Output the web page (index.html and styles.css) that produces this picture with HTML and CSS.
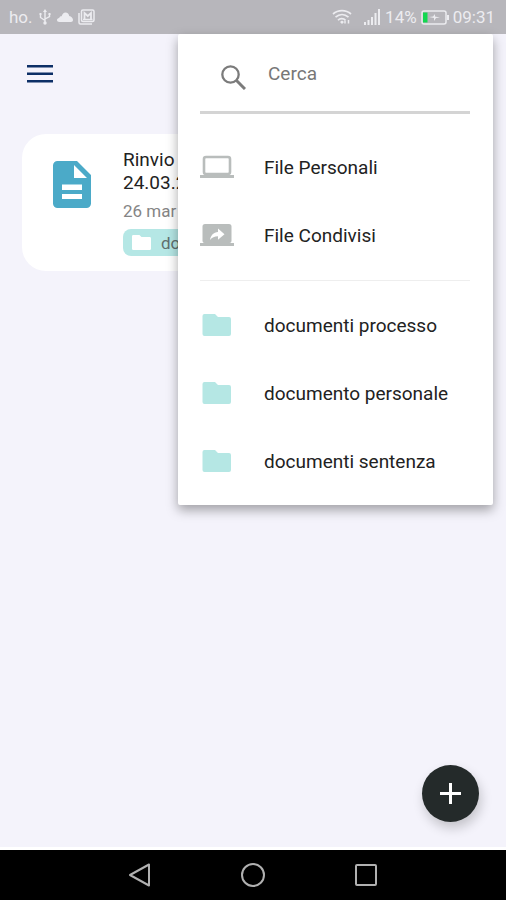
FILE: index.html
```html
<!DOCTYPE html>
<html lang="it">
<head>
<meta charset="utf-8">
<meta name="viewport" content="width=device-width, initial-scale=1">
<title>File</title>
<link rel="stylesheet" href="styles.css">
</head>
<body>
<div class="app">
  <header class="status">
    <div class="status-group">
      <span>ho.</span>
      <svg width="14" height="18" viewBox="0 0 14 18" fill="none" stroke="currentColor" stroke-width="1.4"><path d="M7 3v12M2.500 6.500v3L7 12.500M11.500 6v2.500L7 11"/><path d="M7 1l2 3H5zM1.500 5h2v2h-2zM10.500 5h2v2h-2z" fill="currentColor" stroke="none"/><circle cx="7" cy="15" r="1.700" fill="currentColor" stroke="none"/></svg>
      <svg width="16" height="10" viewBox="0 0 16 10" fill="currentColor"><path d="M2.500 10C.8 10 0 9 0 8s.9-2 2.200-2.100C2.800 4.600 3.800 4.200 4.600 4.300 5.300 1.900 6.700.5 8.600.5c2 0 3.300 1.500 3.600 3.400C14.500 4.200 16 6 16 8c0 1.300-.9 2-2 2z"/></svg>
      <svg width="17" height="16" viewBox="0 0 17 16" fill="none" stroke="currentColor" stroke-width="1.500"><path d="M1 4v9.500c0 1 .5 1.500 1.500 1.500H14"/><rect x="3.500" y="1" width="12.500" height="11.500" rx="1.500"/><path d="M6.500 10V4l3.300 3L13 4v6" stroke-width="1.800"/><path d="M5 10.500h9.500"/></svg>
    </div>
    <div class="status-group">
      <svg class="wifi" width="20" height="16" viewBox="0 0 20 16" fill="none" stroke="currentColor" stroke-width="1.700"><path d="M1 5c5-4.500 13-4.500 18 0M3.500 8.200c4-3.500 9-3.500 13 0M6 11.200c2-2.200 5.500-2.200 7.500 0"/><path d="M8 13l2-1.500 2 1.500-2 2z" fill="currentColor" stroke="none"/><path d="M13 14.500v-3M16.500 11v3.500" stroke-width="1.500"/></svg>
      <svg width="17" height="16" viewBox="0 0 17 16" fill="currentColor"><path d="M0 13h2v3H0zM3.500 11h2v5h-2zM7 8h2v8H7zM10.500 4h2v12h-2zM14 0h2v16h-2z"/></svg>
      <span>14%</span>
      <svg width="28" height="15" viewBox="0 0 28 15"><rect x="1" y="1" width="24" height="13" rx="2" fill="none" stroke="currentColor" stroke-width="1.500"/><path d="M26 5h2v5h-2z" fill="currentColor"/><path d="M2 2.500h4.500v10H2z" fill="#12d850"/><path d="M8 7l4-.5 2-2.500v2.500l5 1-4 .5-2 3V8z" fill="currentColor"/></svg>
      <span>09:31</span>
    </div>
  </header>

  <main class="screen">
    <button class="icon-button" type="button" aria-label="Menu">
      <svg width="26" height="18" viewBox="0 0 26 18" fill="#0c2f66"><path d="M0 0h26v2.500H0zM0 7.500h26V10H0zM0 15h26v2.500H0z"/></svg>
    </button>

    <article class="card">
      <svg class="card-icon" width="38" height="47" viewBox="0 0 38 47"><path fill="#4baac8" d="M4.500 0H24l14 14v28.500a4.500 4.500 0 0 1-4.500 4.500h-29A4.500 4.500 0 0 1 0 42.500v-38A4.500 4.500 0 0 1 4.500 0z"/><path fill="#fff" d="M21 4v13h13zM9 23.500h20V29H9zM9 33h20v5H9z"/></svg>
      <div class="card-body">
        <h2 class="card-title">Rinvio<br>24.03.2</h2>
        <p class="card-date">26 mar</p>
        <span class="tag">
          <svg width="19" height="15" viewBox="0 0 28 22" fill="#fff" preserveAspectRatio="none"><path d="M2 0h9l3 3h12a2 2 0 0 1 2 2v15a2 2 0 0 1-2 2H2a2 2 0 0 1-2-2V2a2 2 0 0 1 2-2z"/></svg>
          <span>do</span>
        </span>
      </div>
    </article>

    <button class="fab" type="button" aria-label="Aggiungi">
      <svg width="21" height="21" viewBox="0 0 21 21" fill="#fff"><path d="M9 0h3v9h9v3h-9v9H9v-9H0V9h9z"/></svg>
    </button>
  </main>

  <aside class="menu">
    <label class="search">
      <svg width="25" height="25" viewBox="0 0 25 25" fill="none" stroke="#7b7b7b" stroke-width="2.300"><circle cx="9.500" cy="9.500" r="8.200"/><path d="M15.500 15.500l8.500 8.500" stroke-width="3"/></svg>
      <input type="search" placeholder="Cerca" aria-label="Cerca">
    </label>
    <nav>
      <div class="group">
        <a class="item" href="#personali">
          <svg width="34" height="24" viewBox="0 0 34 24"><rect x="4" y="2" width="26" height="17" rx="2" fill="none" stroke="#b9bdbc" stroke-width="2.600"/><path d="M0 20h34v3H0z" fill="#b9bdbc"/></svg>
          <span>File Personali</span></a>
        <a class="item" href="#condivisi">
          <svg width="34" height="24" viewBox="0 0 34 24"><path d="M5 1h24a2.500 2.500 0 0 1 2.500 2.500V18a2 2 0 0 1-2 2H34v3H0v-3h4.500a2 2 0 0 1-2-2V3.500A2.500 2.500 0 0 1 5 1z" fill="#b9bdbc"/><path d="M10 17c.8-5 3.500-7.500 8-8V5.500l6.500 5.700-6.500 5.600v-3.500c-3.500 0-6 1.200-8 3.700z" fill="#fff"/></svg>
          <span>File Condivisi</span></a>
      </div>
      <div class="group">
        <a class="item" href="#processo">
          <svg class="folder" width="34" height="24" viewBox="0 0 34 24"><path d="M4.500 1H15l3 3h11a2 2 0 0 1 2 2v15a2 2 0 0 1-2 2H4.500a2 2 0 0 1-2-2V3a2 2 0 0 1 2-2z"/></svg>
          <span>documenti processo</span></a>
        <a class="item" href="#personale">
          <svg class="folder" width="34" height="24" viewBox="0 0 34 24"><path d="M4.500 1H15l3 3h11a2 2 0 0 1 2 2v15a2 2 0 0 1-2 2H4.500a2 2 0 0 1-2-2V3a2 2 0 0 1 2-2z"/></svg>
          <span>documento personale</span></a>
        <a class="item" href="#sentenza">
          <svg class="folder" width="34" height="24" viewBox="0 0 34 24"><path d="M4.500 1H15l3 3h11a2 2 0 0 1 2 2v15a2 2 0 0 1-2 2H4.500a2 2 0 0 1-2-2V3a2 2 0 0 1 2-2z"/></svg>
          <span>documenti sentenza</span></a>
      </div>
    </nav>
  </aside>

  <footer class="system-nav">
    <button type="button" aria-label="Indietro"><svg width="24" height="24" viewBox="0 0 24 24"><path d="M21 1.500v21L2 12z"/></svg></button>
    <button type="button" aria-label="Home"><svg width="24" height="24" viewBox="0 0 24 24"><circle cx="12" cy="12" r="11"/></svg></button>
    <button type="button" aria-label="Recenti"><svg width="24" height="24" viewBox="0 0 24 24"><rect x="2" y="2" width="20" height="20" rx="1"/></svg></button>
  </footer>
</div>
</body>
</html>
```
FILE: styles.css
```css
* {
  box-sizing: border-box;
}

body {
  margin: 0;
  font-family: Roboto, "Liberation Sans", sans-serif;
  font-size: 19px;
  color: #222;
}

svg {
  display: block;
  flex: none;
}

button {
  padding: 0;
  border: 0;
  background: none;
  cursor: pointer;
}

.app {
  position: relative;
  display: flex;
  flex-direction: column;
  min-height: 100vh;
  background: #f4f3fb;
}

.status {
  display: flex;
  justify-content: space-between;
  align-items: center;
  height: 34px;
  padding: 0 11px 0 9px;
  background: #b7b6bb;
  color: #ececf0;
  font-size: 17px;
}

.status-group {
  display: flex;
  align-items: center;
  gap: 4px;
}

.status-group:first-child {
  gap: 5px;
}

.wifi {
  margin-right: 8px;
}

.screen {
  flex: 1;
  display: flex;
  flex-direction: column;
  padding: 30px 22px 25px;
  border-bottom: 3px solid #fff;
}

.icon-button {
  display: flex;
  align-items: center;
  justify-content: center;
  width: 36px;
  height: 20px;
  margin-bottom: 50px;
}

.card {
  display: flex;
  gap: 32px;
  padding: 14px 31px 15px;
  border-radius: 24px;
  background: #fff;
}

.card-icon {
  margin-top: 13px;
}

.card-title,
.card-date {
  margin: 0;
  font-weight: 400;
}

.card-title {
  font-size: 19px;
  line-height: 23px;
}

.card-date {
  margin: 6px 0 7px;
  font-size: 17px;
  line-height: 22px;
  color: #858585;
}

.tag {
  display: flex;
  align-items: center;
  gap: 10px;
  width: 180px;
  height: 27px;
  padding: 0 9px;
  border-radius: 8px;
  background: #b5e7e5;
  color: #60706f;
  font-size: 17px;
}

.fab {
  display: grid;
  place-items: center;
  align-self: flex-end;
  width: 57px;
  height: 57px;
  margin: auto 5px 0 0;
  border-radius: 50%;
  background: #242a2a;
  box-shadow: 2px 6px 12px rgba(0, 0, 0, 0.2);
}

.menu {
  position: absolute;
  top: 34px;
  right: 13px;
  width: 315px;
  padding: 0 23px 10px 22px;
  border-radius: 2px;
  background: #fff;
  box-shadow: 0 5px 12px rgba(0, 0, 0, 0.35);
}

.search {
  display: flex;
  align-items: center;
  gap: 22px;
  height: 80px;
  padding: 9px 0 0 21px;
  border-bottom: 3px solid #d4d4d4;
}

.search input {
  flex: 1;
  min-width: 0;
  padding: 0 0 8px;
  border: 0;
  outline: 0;
  background: none;
  font: inherit;
}

.search input::placeholder {
  color: #777;
  opacity: 1;
}

.group {
  padding: 19px 0 11px;
}

.group + .group {
  padding: 10px 0 0;
  border-top: 1px solid #eee;
}

.item {
  display: flex;
  align-items: center;
  gap: 30px;
  height: 68px;
  color: #222;
  text-decoration: none;
  white-space: nowrap;
}

.folder {
  fill: #b5e7e4;
}

.system-nav {
  display: flex;
  justify-content: center;
  align-items: center;
  gap: 89px;
  height: 50px;
  background: #000;
}

.system-nav svg {
  fill: none;
  stroke: #b0b0b0;
  stroke-width: 2px;
  stroke-linejoin: round;
}
```
